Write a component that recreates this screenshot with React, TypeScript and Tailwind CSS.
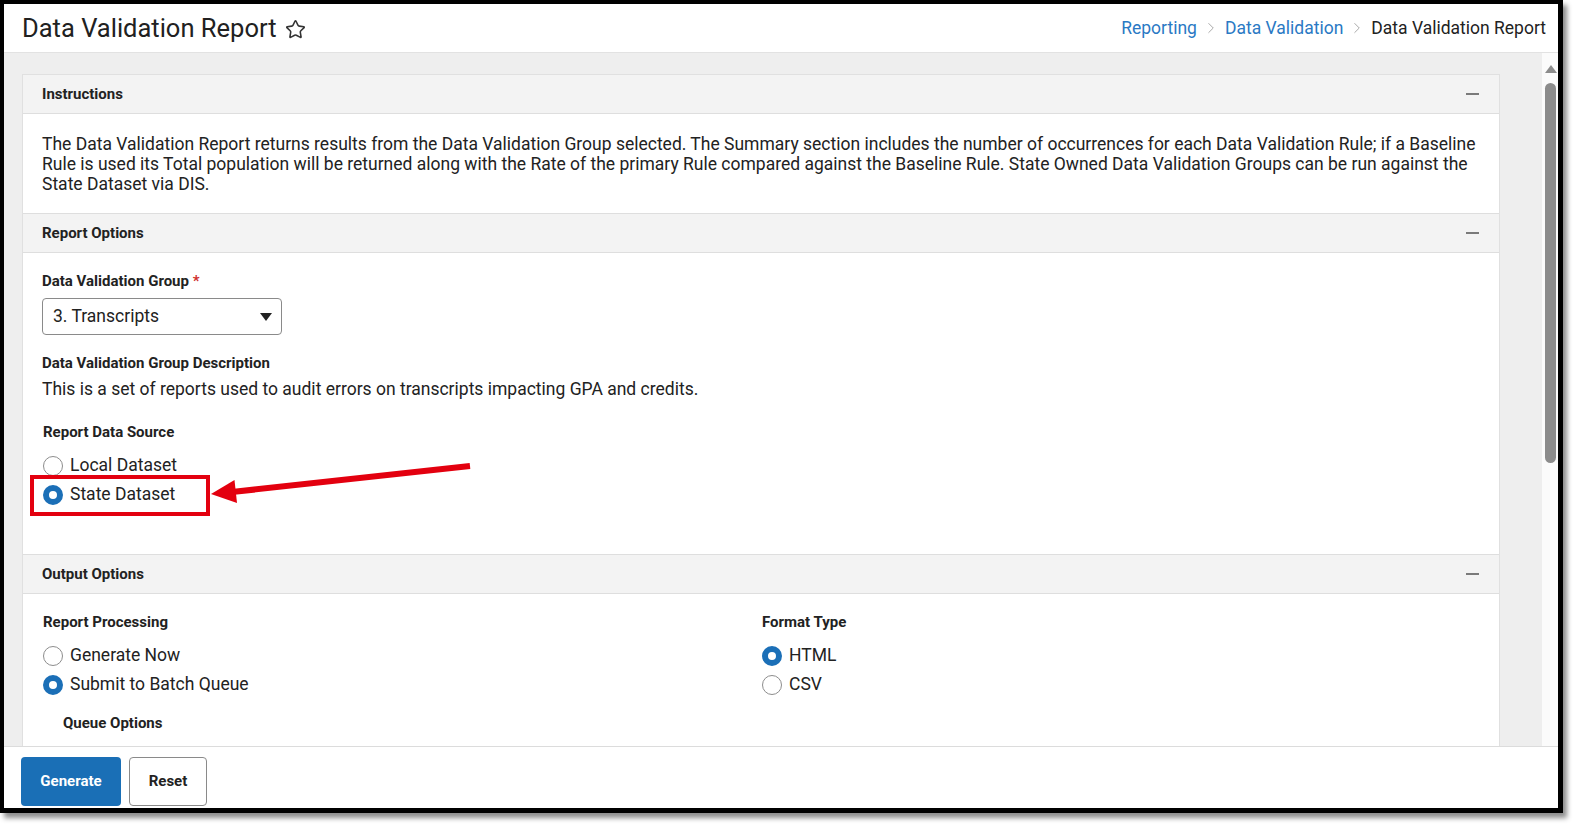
import React from "react";
import { Star, ChevronRight } from "lucide-react";

const Radio = ({ checked }: { checked: boolean }) =>
  checked ? (
    <span className="block w-[20px] h-[20px] rounded-full border-[6px] border-[#1b6fb7] bg-white shrink-0" />
  ) : (
    <span className="block w-[20px] h-[20px] rounded-full border border-[#8d8d8d] bg-white shrink-0" />
  );

const RadioRow = ({ checked, label }: { checked: boolean; label: string }) => (
  <div className="flex items-center h-[29px] gap-[7px]">
    <Radio checked={checked} />
    <span className="text-[17.5px] text-[#222]">{label}</span>
  </div>
);

const SectionHeader = ({ title }: { title: string }) => (
  <div className="h-[39px] bg-[#f3f3f3] border-b border-[#dedede] flex items-center justify-between pl-[19px] pr-[20px]">
    <span className="text-[15px] font-bold text-[#222]">{title}</span>
    <span className="block w-[13px] h-[2px] bg-[#7a7a7a]" />
  </div>
);

const Label = ({ children, className = "" }: { children: React.ReactNode; className?: string }) => (
  <div className={"text-[15px] leading-[20px] font-bold text-[#222] " + className}>{children}</div>
);

export default function App() {
  return (
    <div className="relative w-[1577px] h-[827px] bg-white overflow-hidden" style={{ fontFamily: "Roboto, 'Noto Sans', sans-serif" }}>
      <div className="w-[1563px] h-[813px] border-l-4 border-t-4 border-r-[5px] border-b-[5px] border-black shadow-[4px_5px_5px_rgba(0,0,0,0.45)] flex flex-col bg-white">
        {/* Header */}
        <div className="h-[49px] shrink-0 border-b border-[#e2e2e2] flex items-center justify-between pl-[18px] pr-[12px]">
          <div className="flex items-center gap-[8px] pt-[2px]">
            <span className="text-[25.5px] text-[#212121] leading-none">Data Validation Report</span>
            <Star size={21} strokeWidth={1.8} className="text-[#333]" />
          </div>
          <div className="flex items-center text-[17.5px]">
            <span className="text-[#2a79c4]">Reporting</span>
            <ChevronRight size={18} strokeWidth={1.3} className="text-[#a8a8a8] mx-[5px]" />
            <span className="text-[#2a79c4]">Data Validation</span>
            <ChevronRight size={18} strokeWidth={1.3} className="text-[#a8a8a8] mx-[5px]" />
            <span className="text-[#222]">Data Validation Report</span>
          </div>
        </div>

        {/* Main */}
        <div className="flex flex-1 min-h-0">
          <div className="flex-1 bg-[#eeeeee] overflow-hidden pl-[18px] pr-[42px] pt-[21px]">
            <div className="border border-[#e0e0e0] bg-white">
              <SectionHeader title="Instructions" />
              <div className="border-b border-[#dedede] pl-[19px] pr-[20px] pt-[20px] pb-[19px] text-[17.5px] leading-[20px] text-[#222]">
                The Data Validation Report returns results from the Data Validation Group selected. The Summary section includes the number of occurrences for each Data Validation Rule; if a Baseline Rule is used its Total population will be returned along with the Rate of the primary Rule compared against the Baseline Rule. State Owned Data Validation Groups can be run against the State Dataset via DIS.
              </div>
              <SectionHeader title="Report Options" />
              <div className="border-b border-[#dedede] px-[20px] pt-[18px] pb-[45px]">
                <Label className="-ml-px">
                  Data Validation Group <span className="text-[#d0312d]">*</span>
                </Label>
                <div className="mt-[7px] -ml-px w-[240px] h-[37px] border border-[#8a8a8a] rounded-[4px] flex items-center justify-between pl-[10px] pr-[9px]">
                  <span className="text-[17.5px] text-[#222]">3. Transcripts</span>
                  <svg width="12" height="8" viewBox="0 0 12 8"><path d="M0 0 L12 0 L6 8 Z" fill="#222" /></svg>
                </div>
                <Label className="mt-[18px] -ml-px">Data Validation Group Description</Label>
                <div className="mt-[6px] -ml-px text-[17.5px] leading-[20px] text-[#222]">
                  This is a set of reports used to audit errors on transcripts impacting GPA and credits.
                </div>
                <Label className="mt-[23px]">Report Data Source</Label>
                <div className="mt-[9px]">
                  <RadioRow checked={false} label="Local Dataset" />
                  <RadioRow checked={true} label="State Dataset" />
                </div>
              </div>
              <SectionHeader title="Output Options" />
              <div className="px-[20px] pt-[18px] pb-[40px] flex">
                <div className="w-[719px]">
                  <Label>Report Processing</Label>
                  <div className="mt-[9px]">
                    <RadioRow checked={false} label="Generate Now" />
                    <RadioRow checked={true} label="Submit to Batch Queue" />
                  </div>
                  <Label className="mt-[14px] ml-[20px]">Queue Options</Label>
                </div>
                <div>
                  <Label>Format Type</Label>
                  <div className="mt-[9px]">
                    <RadioRow checked={true} label="HTML" />
                    <RadioRow checked={false} label="CSV" />
                  </div>
                </div>
              </div>
            </div>
          </div>
          {/* Scrollbar */}
          <div className="w-[16px] shrink-0 bg-[#fbfbfb] flex flex-col items-center pt-[12px]">
            <svg width="12" height="8" viewBox="0 0 12 8" className="ml-[1px]"><path d="M0 8 L6 0 L12 8 Z" fill="#8c8c8c" /></svg>
            <div className="mt-[10px] ml-[1px] w-[11px] h-[380px] rounded-full bg-[#8c8c8c]" />
          </div>
        </div>

        {/* Footer */}
        <div className="h-[62px] shrink-0 border-t border-[#dcdcdc] bg-white flex items-start gap-[8px] pl-[17px] pt-[10px]">
          <button className="w-[100px] h-[49px] rounded-[4px] bg-[#1a6fb6] text-white text-[15px] font-bold">Generate</button>
          <button className="w-[78px] h-[49px] rounded-[4px] bg-white border border-[#8a8a8a] text-[#222] text-[15px] font-bold">Reset</button>
        </div>
      </div>

      {/* Annotation overlays */}
      <div className="absolute left-[30px] top-[475px] w-[180px] h-[41px] border-4 border-[#e3000f]" />
      <svg className="absolute left-0 top-0" width="1577" height="827">
        <line x1="470" y1="466" x2="232" y2="492" stroke="#e3000f" strokeWidth="6" />
        <polygon points="211,494 237,503 234.5,480" fill="#e3000f" />
      </svg>
    </div>
  );
}
